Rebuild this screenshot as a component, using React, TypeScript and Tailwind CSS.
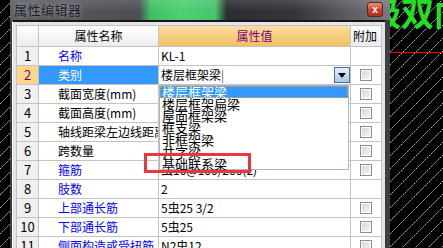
import React from "react";

type Row = {
  n: number;
  name: string;
  blue: boolean;
  value: string;
  check: boolean;
};

const rows: Row[] = [
  { n: 1, name: "名称", blue: true, value: "KL-1", check: false },
  { n: 2, name: "类别", blue: true, value: "楼层框架梁", check: true },
  { n: 3, name: "截面宽度(mm)", blue: false, value: "300", check: true },
  { n: 4, name: "截面高度(mm)", blue: false, value: "600", check: true },
  { n: 5, name: "轴线距梁左边线距离(mm)", blue: false, value: "(150)", check: true },
  { n: 6, name: "跨数量", blue: false, value: "", check: true },
  { n: 7, name: "箍筋", blue: true, value: "虫10@100/200(2)", check: true },
  { n: 8, name: "肢数", blue: true, value: "2", check: false },
  { n: 9, name: "上部通长筋", blue: true, value: "5虫25 3/2", check: true },
  { n: 10, name: "下部通长筋", blue: true, value: "5虫25", check: true },
  { n: 11, name: "侧面构造或受扭筋", blue: true, value: "N2虫12", check: true },
];

const options = ["楼层框架梁", "楼层框架扁梁", "屋面框架梁", "框支梁", "非框架梁", "井字梁", "基础联系梁"];

const font = "font-['SimSun','Noto_Sans_CJK_SC',sans-serif]";

function Check() {
  return (
    <span className="block w-[12px] h-[12px] border border-[#8c8c8c] bg-[linear-gradient(135deg,#d4d4d4,#f8f8f8)] shadow-[inset_0_0_0_1px_#ffffff]" />
  );
}

function CadBackground() {
  return (
    <svg className="absolute inset-0" width="443" height="248">
      <defs>
        <pattern id="hatch" width="13" height="13" patternUnits="userSpaceOnUse">
          <path d="M0 13 L13 0" stroke="#d0d0d0" strokeWidth="0.9" strokeDasharray="2 1" />
        </pattern>
      </defs>
      <rect width="443" height="248" fill="#000" />
      <rect width="443" height="248" fill="url(#hatch)" />
      <line x1="390" y1="52.5" x2="443" y2="52.5" stroke="#ff0000" strokeWidth="1" />
    </svg>
  );
}

export default function App() {
  return (
    <div className={`relative w-[443px] h-[248px] overflow-hidden bg-black ${font}`}>
      <CadBackground />

      {/* CAD text behind window */}
      <div className="absolute left-[368px] top-[-4px] text-[33px] leading-none font-bold text-[#22e022] whitespace-nowrap font-['Noto_Sans_CJK_SC',sans-serif]">
        级双向
      </div>

      {/* Window */}
      <div className="absolute left-[10px] top-0 w-[380px] h-[260px] flex flex-col bg-[#3c4046]">
        {/* Title bar */}
        <div className="relative h-[20px] shrink-0 bg-[linear-gradient(to_bottom,rgba(255,255,255,0.12),rgba(255,255,255,0)_60%),linear-gradient(to_right,#5b5c61_0%,#4d4e53_34%,#40c064_37%,#4fcf73_45%,#46c56c_54%,#2c2d32_57%,#34353a_75%,#5e5f64_90%,#7a7b80_100%)]">
          <span className="absolute left-[4px] top-[2px] text-[13px] leading-[15px] tracking-[0.5px] text-[#1b1e2b] [text-shadow:0_0_5px_rgba(255,255,255,0.55)] font-['Noto_Sans_CJK_SC',sans-serif]">
            属性编辑器
          </span>
          <div className="absolute left-[357px] top-[2px] w-[16px] h-[15px] rounded-[3px] border border-[#5b2419] bg-[linear-gradient(to_bottom,#e9917c,#c8472f_50%,#b12f18)] flex items-center justify-center">
            <span className="text-white text-[10px] leading-none font-bold font-['Liberation_Sans',sans-serif]">x</span>
          </div>
        </div>

        {/* Client */}
        <div className="flex-1 ml-[2px] mr-[5px] border-t-2 border-[#161616] bg-[#e4e4e4] pl-[3px] pt-[3px] pr-[5px] border-l border-l-white">
          <div className="relative w-[366px]">
            <div className="grid grid-cols-[21px_119px_191px_30px] gap-px bg-[#c3c3c3] border border-[#c3c3c3] text-[12px]">
              {/* header */}
              <div className="h-[20px] bg-[linear-gradient(to_bottom,#ffffff,#ececec)]" />
              <div className="h-[20px] bg-[linear-gradient(to_bottom,#ffffff,#ececec)] flex items-center justify-center text-black">
                属性名称
              </div>
              <div className="h-[20px] bg-[linear-gradient(to_bottom,#fbdca2,#f1c062)] flex items-center justify-center text-[#80007f]">
                属性值
              </div>
              <div className="h-[20px] bg-[linear-gradient(to_bottom,#ffffff,#ececec)] flex items-center pl-[2px] text-black">
                附加
              </div>

              {rows.map((r) => {
                const sel = r.n === 2;
                return (
                  <React.Fragment key={r.n}>
                    <div
                      className={`h-[18px] flex items-center justify-center text-[13px] ${
                        sel ? "bg-[#ffd48c] text-[#6a0a6a]" : "bg-[#f0f0f0] text-black"
                      }`}
                    >
                      {r.n}
                    </div>
                    <div
                      className={`h-[18px] flex items-center pl-[19px] whitespace-nowrap overflow-hidden ${
                        sel ? "bg-[#3399ff] text-white" : r.blue ? "bg-white text-[#0000ff]" : "bg-white text-black"
                      }`}
                    >
                      {r.name}
                    </div>
                    <div className="h-[18px] bg-white flex items-center pl-[2px] whitespace-nowrap overflow-hidden text-black">
                      {sel ? (
                        <div className="flex w-full items-center justify-between">
                          <span>
                            楼层框架梁<span className="font-light">|</span>
                          </span>
                          <span className="w-[16px] h-[16px] border border-[#4a6f96] bg-[linear-gradient(to_bottom,#e6f0fa,#a9c7e6)] flex items-center justify-center">
                            <svg width="8" height="5" viewBox="0 0 8 5">
                              <path d="M0 0 H8 L4 5 Z" fill="#000" />
                            </svg>
                          </span>
                        </div>
                      ) : (
                        r.value
                      )}
                    </div>
                    <div className="h-[18px] bg-white flex items-center justify-center">
                      {r.check && <Check />}
                    </div>
                  </React.Fragment>
                );
              })}
            </div>

            {/* Dropdown list */}
            <div className="absolute left-[143px] top-[60px] w-[190px] h-[85px] bg-white border border-[#a9b8c8] text-[13px] leading-[12px] text-black">
              {options.map((o, i) => (
                <div
                  key={o}
                  className={`h-[12px] pl-[2px] whitespace-nowrap ${
                    i === 0 ? "bg-[#3399ff] text-white outline-1 outline-dotted outline-[#e0a040] -outline-offset-1" : ""
                  }`}
                >
                  {o}
                </div>
              ))}
            </div>

            {/* Red highlight */}
            <div className="absolute left-[128px] top-[128px] w-[107px] h-[20px] border-[3px] border-[#e8383c]" />
          </div>
        </div>
      </div>
    </div>
  );
}
